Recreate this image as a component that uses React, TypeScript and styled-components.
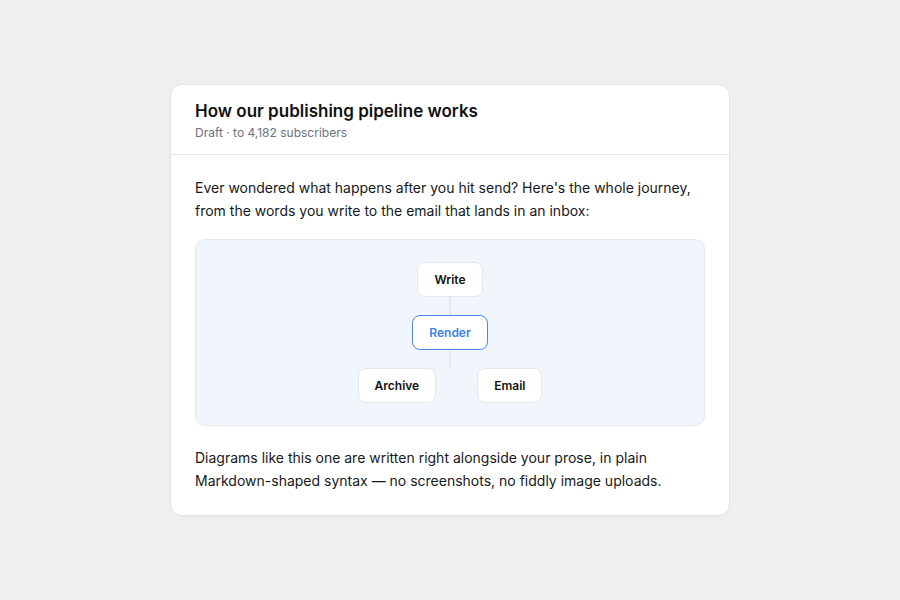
import React from "react";
import styled, { createGlobalStyle } from "styled-components";

const GlobalStyle = createGlobalStyle`
  html, body {
    margin: 0;
    padding: 0;
    background: #f0efed;
    font-family: Inter, "Noto Sans", "Liberation Sans", sans-serif;
    -webkit-font-smoothing: antialiased;
  }
`;

const Page = styled.div`
  width: 100%;
  height: 600px;
  display: flex;
  align-items: center;
  justify-content: center;
`;

const Card = styled.article`
  width: 558px;
  background: #ffffff;
  border: 1px solid #e4e4e2;
  border-radius: 12px;
  box-shadow: 0 1px 2px rgba(0, 0, 0, 0.03);
  overflow: hidden;
`;

const Header = styled.header`
  display: flex;
  flex-direction: column;
  gap: 2px;
  padding: 15px 24px 12px;
  border-bottom: 1px solid #e6e7ea;
`;

const Title = styled.h1`
  margin: 0;
  font-size: 17px;
  line-height: 22px;
  font-weight: 600;
  color: #111111;
`;

const Meta = styled.div`
  font-size: 12px;
  line-height: 18px;
  color: #6b7280;
`;

const Body = styled.div`
  display: flex;
  flex-direction: column;
  padding: 21px 24px 23px;
`;

const Paragraph = styled.p`
  margin: 0;
  font-size: 14px;
  line-height: 23px;
  color: #16181d;
`;

const Diagram = styled.div`
  display: flex;
  flex-direction: column;
  align-items: center;
  margin: 17px 0 20px;
  padding: 22px 0;
  background: #f1f6fd;
  border: 1px solid #e2e8f0;
  border-radius: 10px;
`;

const Node = styled.div<{ $active?: boolean }>`
  height: 35px;
  box-sizing: border-box;
  display: flex;
  align-items: center;
  padding: 0 16px;
  background: #ffffff;
  border: 1px solid ${(p) => (p.$active ? "#4a86f0" : "#e4e7ec")};
  border-radius: 8px;
  font-size: 12px;
  font-weight: 600;
  color: ${(p) => (p.$active ? "#3b7ff0" : "#111111")};
`;

const Stem = styled.div<{ $h: number }>`
  width: 2px;
  height: ${(p) => p.$h}px;
  background: #e3e6eb;
`;

const Branch = styled.div`
  display: flex;
  gap: 41px;
`;

export default function App(): React.JSX.Element {
  return (
    <>
      <GlobalStyle />
      <Page>
        <Card>
          <Header>
            <Title>How our publishing pipeline works</Title>
            <Meta>Draft · to 4,182 subscribers</Meta>
          </Header>
          <Body>
            <Paragraph>
              Ever wondered what happens after you hit send? Here's the whole journey,
              from the words you write to the email that lands in an inbox:
            </Paragraph>
            <Diagram>
              <Node>Write</Node>
              <Stem $h={18} />
              <Node $active>Render</Node>
              <Stem $h={18} />
              <Branch>
                <Node>Archive</Node>
                <Node>Email</Node>
              </Branch>
            </Diagram>
            <Paragraph>
              Diagrams like this one are written right alongside your prose, in plain
              Markdown-shaped syntax — no screenshots, no fiddly image uploads.
            </Paragraph>
          </Body>
        </Card>
      </Page>
    </>
  );
}
